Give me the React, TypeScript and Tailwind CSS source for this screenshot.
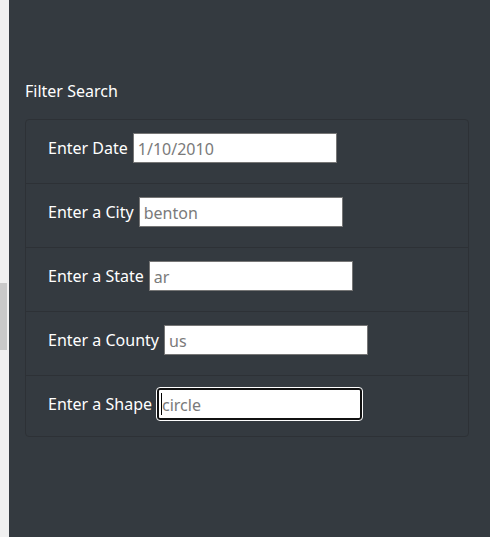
const filters = [
  { label: "Enter Date", placeholder: "1/10/2010" },
  { label: "Enter a City", placeholder: "benton" },
  { label: "Enter a State", placeholder: "ar" },
  { label: "Enter a County", placeholder: "us" },
];

export default function App() {
  return (
    <div className="flex h-[537px] w-[490px] bg-[#f0f0f0] font-['Noto_Sans',sans-serif]">
      <div className="w-[9px] pt-[283px]">
        <div className="h-[67px] w-[7px] bg-[#c9c9c9]" />
      </div>
      <main className="flex-1 bg-[#343a40] pl-4 pr-[21px] pt-[80px]">
        <h5 className="mb-[17px] text-[16px] leading-[22px] text-white">Filter Search</h5>
        <ul className="rounded-[4px] border border-[#2d3136]">
          {filters.map((f) => (
            <li
              key={f.label}
              className="flex items-center border-b border-[#2d3136] px-[22px] pb-[20px] pt-[13px] text-[16px] text-white"
            >
              <label className="mr-[5px]">{f.label}</label>
              <input
                placeholder={f.placeholder}
                className="h-[30px] w-[204px] border border-[#767676] bg-white px-[4px] pt-[2px] text-[16px] placeholder:text-[#7a7a7a]"
              />
            </li>
          ))}
          <li className="flex items-center px-[22px] pb-[16px] pt-[12px] text-[16px] text-white">
            <label className="mr-[5px]">Enter a Shape</label>
            <div className="relative">
              <input
                placeholder="circle"
                className="h-[32px] w-[205px] rounded-[3px] border-2 border-[#111] bg-white px-[3px] pt-[2px] text-[16px] outline-1 outline-white placeholder:text-[#7a7a7a]"
              />
              <span className="absolute left-[4px] top-[5px] h-[22px] w-px bg-black" />
            </div>
          </li>
        </ul>
      </main>
    </div>
  );
}
